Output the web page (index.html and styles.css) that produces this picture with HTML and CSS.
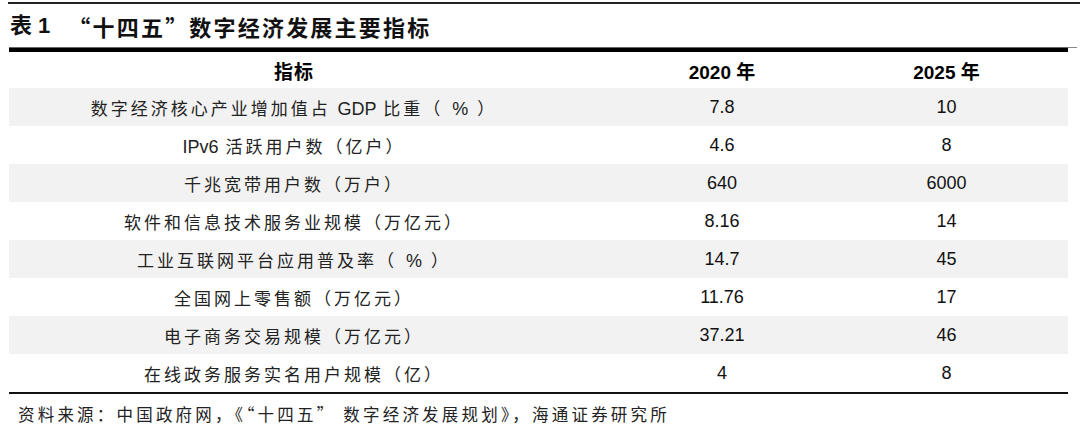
FILE: index.html
```html
<!DOCTYPE html>
<html lang="zh">
<head>
<meta charset="utf-8">
<link rel="stylesheet" href="styles.css">
</head>
<body>
<div class="page">
  <div class="top-rule"></div>
  <h1 class="title"><span class="num">表 1</span><span class="q">“十四五”数字经济发展主要指标</span></h1>
  <div class="thick-rule"></div>
  <div class="table">
    <div class="row head"><div class="c1">指标</div><div class="c2">2020 年</div><div class="c3">2025 年</div></div>
    <div class="row alt"><div class="c1">数字经济核心产业增加值占 <span class="lat">GDP</span> 比重（<span class="lat pct">%</span>）</div><div class="c2">7.8</div><div class="c3">10</div></div>
    <div class="row"><div class="c1"><span class="lat">IPv6</span> 活跃用户数（亿户）</div><div class="c2">4.6</div><div class="c3">8</div></div>
    <div class="row alt"><div class="c1">千兆宽带用户数（万户）</div><div class="c2">640</div><div class="c3">6000</div></div>
    <div class="row"><div class="c1">软件和信息技术服务业规模（万亿元）</div><div class="c2">8.16</div><div class="c3">14</div></div>
    <div class="row alt"><div class="c1">工业互联网平台应用普及率（<span class="lat pct">%</span>）</div><div class="c2">14.7</div><div class="c3">45</div></div>
    <div class="row"><div class="c1">全国网上零售额（万亿元）</div><div class="c2">11.76</div><div class="c3">17</div></div>
    <div class="row alt"><div class="c1">电子商务交易规模（万亿元）</div><div class="c2">37.21</div><div class="c3">46</div></div>
    <div class="row"><div class="c1">在线政务服务实名用户规模（亿）</div><div class="c2">4</div><div class="c3">8</div></div>
  </div>
  <p class="source">资料来源：中国政府网，《“十四五” 数字经济发展规划》，海通证券研究所</p>
</div>
</body>
</html>
```
FILE: styles.css
```css
html, body {
  margin: 0;
  padding: 0;
  background: #ffffff;
}
body {
  width: 1080px;
  height: 433px;
  overflow: hidden;
  color: #111;
  font-family: "Noto Sans CJK SC", "Liberation Sans", sans-serif;
}
.page {
  padding-top: 2px;
}
.top-rule {
  margin-left: 8px;
  height: 2px;
  background: #222;
}
.title {
  margin: 0;
  height: 43px;
  display: flex;
  align-items: center;
  padding-left: 10px;
  font-size: 22px;
  font-weight: 700;
  line-height: 1;
  color: #111;
  letter-spacing: 2.2px;
}
.title .num {
  font-family: "Liberation Sans", "Noto Sans CJK SC", sans-serif;
  margin-right: 18px;
  letter-spacing: 0;
}
.thick-rule {
  margin-left: 9px;
  width: 1068px;
  height: 5px;
  background: linear-gradient(#666 0 1px, #000 1px) left / 1059px 100% no-repeat,
              linear-gradient(#888 0 1px, transparent 1px) right / 9px 100% no-repeat;
}
.table {
  margin-left: 9px;
  width: 1059px;
  border-bottom: 2px solid #111;
}
.row {
  display: grid;
  grid-template-columns: 570px 286px 1fr;
  height: 38px;
  align-items: center;
  font-size: 17px;
}
.row.head {
  height: 36px;
  font-weight: 700;
  font-size: 19px;
}
.row.alt {
  background: #f2f2f2;
}
.c1 {
  text-align: center;
  letter-spacing: 3px;
  color: #222;
}
.c2, .c3 {
  text-align: center;
  font-size: 18px;
  font-family: "Liberation Sans", "Noto Sans CJK SC", sans-serif;
}
.c3 {
  padding-right: 40px;
}
.head .c1, .head .c2, .head .c3 {
  color: #000;
  letter-spacing: 0;
  font-size: 19px;
}
.head .c1 {
  letter-spacing: 1px;
}
.lat {
  font-family: "Liberation Sans", sans-serif;
  font-size: 18px;
  letter-spacing: 0;
}
.pct {
  padding: 0 9px;
}
.source {
  margin: 0;
  padding: 8px 0 0 18px;
  font-size: 16.5px;
  letter-spacing: 3.2px;
  color: #222;
}
```
